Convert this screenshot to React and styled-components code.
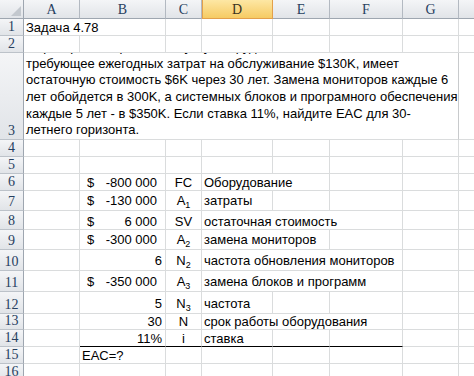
import React from "react";
import styled, { createGlobalStyle } from "styled-components";

const COLUMNS = ["A", "B", "C", "D", "E", "F", "G", "H"];
const SELECTED_COLUMN = "D";

const ROW_HEIGHTS = [17, 17, 87, 17, 17, 17, 20, 19, 20, 21, 21, 22, 16, 17, 17, 17];

const TASK_LINES = [
  "Фирма рассматривает покупку оборудования стоимостью $800K,",
  "требующее ежегодных затрат на обслуживание $130K, имеет",
  "остаточную стоимость $6K через 30 лет. Замена мониторов каждые 6",
  "лет обойдется в 300K, а системных блоков и програмного обеспечения",
  "каждые 5 лет - в $350K. Если ставка 11%, найдите EAC для 30-",
  "летнего горизонта.",
];

// each row lists its cells from column A; missing cells are filled with blanks
const ROWS = [
  { cells: [{ span: 2, text: "Задача 4.78" }] },
  { cells: [] },
  { cells: [{ span: 7, task: true }] },
  { cells: [] },
  { cells: [] },
  { cells: [{}, { money: "-800 000" }, { code: "FC" }, { span: 2, text: "Оборудование" }] },
  { sub: true, cells: [{}, { money: "-130 000" }, { code: "A", idx: "1" }, { text: "затраты" }] },
  { cells: [{}, { money: "6 000" }, { code: "SV" }, { span: 3, text: "остаточная стоимость" }] },
  { sub: true, cells: [{}, { money: "-300 000" }, { code: "A", idx: "2" }, { span: 2, text: "замена мониторов" }] },
  { sub: true, cells: [{}, { num: "6" }, { code: "N", idx: "2" }, { span: 3, text: "частота обновления мониторов" }] },
  { sub: true, cells: [{}, { money: "-350 000" }, { code: "A", idx: "3" }, { span: 3, text: "замена блоков и программ" }] },
  { sub: true, cells: [{}, { num: "5" }, { code: "N", idx: "3" }, { text: "частота" }] },
  { cells: [{}, { num: "30" }, { code: "N" }, { span: 3, text: "срок работы оборудования" }] },
  {
    cells: [
      {},
      { num: "11%", line: true },
      { code: "i", line: true },
      { text: "ставка", line: true },
      { line: true },
      { line: true },
    ],
  },
  { cells: [{}, { text: "EAC=?" }] },
  { cells: [] },
];

function fillRow(cells) {
  const out = [...cells];
  let used = out.reduce((sum, c) => sum + (c.span || 1), 0);
  while (used < COLUMNS.length) {
    out.push({});
    used += 1;
  }
  return out;
}

function CellContent({ cell }) {
  if (cell.task) {
    return (
      <TaskText>
        {TASK_LINES.map((line) => (
          <div key={line}>{line}</div>
        ))}
      </TaskText>
    );
  }
  if (cell.money) {
    return (
      <Money>
        <span>$</span>
        <span>{cell.money}</span>
      </Money>
    );
  }
  if (cell.num) return <NumberValue>{cell.num}</NumberValue>;
  if (cell.code) {
    return (
      <Code>
        {cell.code}
        {cell.idx && <Sub>{cell.idx}</Sub>}
      </Code>
    );
  }
  return cell.text || null;
}

function App() {
  return (
    <>
      <GlobalStyle />
      <Sheet>
        <Corner>
          <svg width="10" height="10" viewBox="0 0 10 10">
            <polygon points="10,0 10,10 0,10" fill="#c3c8ce" />
          </svg>
        </Corner>
        {COLUMNS.map((c) => (
          <ColHead key={c} $active={c === SELECTED_COLUMN}>
            {c}
          </ColHead>
        ))}

        {ROWS.map((row, r) => (
          <React.Fragment key={r}>
            <RowHead>{r + 1}</RowHead>
            {fillRow(row.cells).map((cell, i) => (
              <Cell
                key={i}
                $span={cell.span || 1}
                $line={cell.line}
                $sub={row.sub}
                $task={cell.task}
              >
                <CellContent cell={cell} />
              </Cell>
            ))}
          </React.Fragment>
        ))}
      </Sheet>
    </>
  );
}

const GlobalStyle = createGlobalStyle`
  html, body {
    margin: 0;
    padding: 0;
    background: #ffffff;
    overflow: hidden;
  }
`;

const Sheet = styled.div`
  display: grid;
  grid-template-columns: 24px 56px 86px 36px 71px 57px 73px 56px 80px;
  grid-template-rows: 19px ${ROW_HEIGHTS.map((h) => `${h}px`).join(" ")};
  width: 474px;
  height: 376px;
  overflow: hidden;
  font-family: "Liberation Sans", Arial, sans-serif;
  font-size: 13px;
  color: #000000;
  background: #ffffff;
`;

const HeadBase = styled.div`
  box-sizing: border-box;
  display: flex;
  align-items: center;
  justify-content: center;
  font-family: "Liberation Serif", "Times New Roman", serif;
  font-size: 14px;
  color: #27405f;
  background: linear-gradient(#f4f5f7, #e1e4e8);
`;

const Corner = styled(HeadBase)`
  align-items: flex-end;
  justify-content: flex-end;
  padding: 0 2px 2px 0;
  border-right: 1px solid #9ea6b0;
  border-bottom: 1px solid #9ea6b0;
`;

const ColHead = styled(HeadBase)`
  padding-top: 1px;
  border-right: 1px solid ${(p) => (p.$active ? "#e3a04a" : "#b3b9c1")};
  border-bottom: 1px solid ${(p) => (p.$active ? "#e3a04a" : "#9ea6b0")};
  ${(p) =>
    p.$active &&
    `
    background: linear-gradient(#fde7a4, #f6cb63);
    box-shadow: inset 1px 0 0 #e3a04a;
    color: #3a3320;
  `}
`;

const RowHead = styled(HeadBase)`
  align-items: flex-end;
  padding-bottom: 0;
  line-height: 16px;
  border-right: 1px solid #9ea6b0;
  border-bottom: 1px solid #bcc2c9;
`;

const Cell = styled.div`
  grid-column: span ${(p) => p.$span};
  box-sizing: border-box;
  display: flex;
  align-items: flex-end;
  min-width: 0;
  overflow: hidden;
  white-space: nowrap;
  padding: 0 2px ${(p) => (p.$sub ? "2px" : "0")} 2px;
  line-height: 15px;
  border-right: 1px solid ${(p) => (p.$task ? "#c8cacc" : "#dadcdd")};
  border-bottom: 1px solid ${(p) => (p.$line ? "#000000" : "#dadcdd")};
`;

const TaskText = styled.div`
  display: flex;
  flex-direction: column;
  justify-content: flex-end;
  line-height: 16.67px;
`;

const Money = styled.div`
  flex: 1;
  display: flex;
  justify-content: space-between;
  padding: 0 6px 0 5px;
`;

const NumberValue = styled.div`
  flex: 1;
  text-align: right;
  padding-right: 1px;
`;

const Code = styled.div`
  flex: 1;
  text-align: center;
`;

const Sub = styled.span`
  font-size: 9px;
  vertical-align: -3px;
  line-height: 0;
`;

export default App;
